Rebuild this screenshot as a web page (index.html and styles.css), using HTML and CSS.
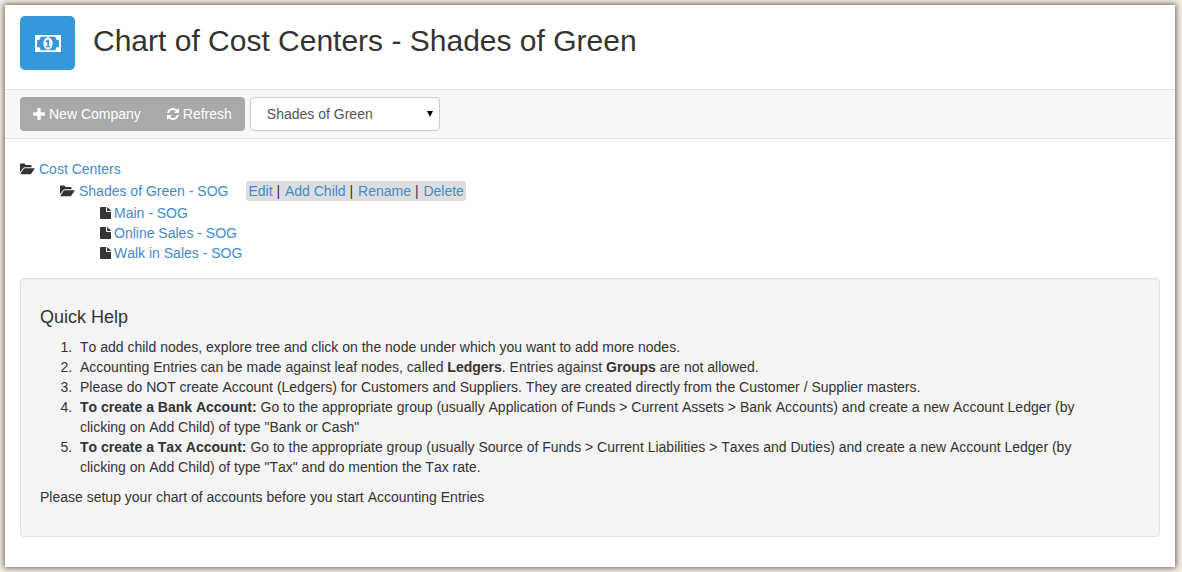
FILE: index.html
```html
<!DOCTYPE html>
<html lang="en">
<head>
<meta charset="utf-8">
<title>Chart of Cost Centers - Shades of Green</title>
<link rel="stylesheet" href="styles.css">
</head>
<body>
<svg class="sprite" aria-hidden="true">
  <symbol id="folder" viewBox="0 0 15 12"><path d="M0 9.600V1.400Q0 .4 1 .4H4.200Q5.200 .4 5.200 1.400V2H10.500Q11.600 2 11.600 3V4.300H5.200Q3.800 4.300 2.900 5.400L.1 9.100ZM.6 11.300Q0 11.300 .4 10.700L3.500 6.100Q4 5.200 5.100 5.200H14.200Q15 5.200 14.500 5.900L11.700 10.100Q11 11.300 9.900 11.300Z"/></symbol>
  <symbol id="file" viewBox="0 0 10 12" preserveAspectRatio="none"><path d="M.8 0H5.500V4.200Q5.500 5 6.300 5H10V11.200Q10 12 9.200 12H.8Q0 12 0 11.200V.8Q0 0 .8 0ZM6.500 .1Q6.800 .2 7.100 .5L9.500 3Q9.900 3.400 9.900 4H6.500Z"/></symbol>
</svg>
<main class="page">
  <header class="page-head">
    <span class="app-icon">
      <svg viewBox="0 0 26 17" aria-hidden="true"><path fill-rule="evenodd" d="M0 0H26V17H0ZM5.500 1.700A3.600 3.600 0 0 1 2 5.300V11.700A3.600 3.600 0 0 1 5.500 15.300H20.500A3.600 3.600 0 0 1 24 11.700V5.300A3.600 3.600 0 0 1 20.500 1.700Z"/><ellipse cx="13" cy="8.500" rx="4.600" ry="6.200"/><path class="one" d="M12.500 4.800H14V10.900H15.500V12.200H10.700V10.900H12.300V7L11.300 7.800L10.400 6.700Z"/></svg>
    </span>
    <h1>Chart of Cost Centers - Shades of Green</h1>
  </header>
  <div class="toolbar">
    <div class="button-group">
      <button type="button"><svg class="tool-icon plus" viewBox="192 128 1408 1408" aria-hidden="true"><path d="M1600 736v192q0 40-28 68t-68 28h-416v416q0 40-28 68t-68 28h-192q-40 0-68-28t-28-68v-416h-416q-40 0-68-28t-28-68v-192q0-40 28-68t68-28h416v-416q0-40 28-68t68-28h192q40 0 68 28t28 68v416h416q40 0 68 28t28 68z"/></svg>New Company</button>
      <button type="button"><svg class="tool-icon" viewBox="128 128 1536 1536" aria-hidden="true"><path d="M1639 1056q0 5-1 7-64 268-268 434.500t-478 166.500q-146 0-282.500-55t-243.500-157l-129 129q-19 19-45 19t-45-19-19-45v-448q0-26 19-45t45-19h448q26 0 45 19t19 45-19 45l-137 137q71 66 161 102t187 36q134 0 250-65t186-179q11-17 53-117 8-23 30-23h192q13 0 22.500 9.500t9.500 22.500zm25-800v448q0 26-19 45t-45 19h-448q-26 0-45-19t-19-45 19-45l138-138q-148-137-349-137-134 0-250 65t-186 179q-11 17-53 117-8 23-30 23h-199q-13 0-22.500-9.500t-9.500-22.500v-7q65-268 270-434.500t480-166.500q146 0 284 55.500t245 156.500l130-129q19-19 45-19t45 19 19 45z"/></svg>Refresh</button>
    </div>
    <div class="select-wrap">
      <select aria-label="Company"><option>Shades of Green</option></select>
      <svg class="arrow" viewBox="0 0 6 6" aria-hidden="true"><path d="M0 0H6L3 6Z"/></svg>
    </div>
  </div>
  <div class="content">
    <ul class="tree">
      <li>
        <div class="node"><svg class="folder"><use href="#folder"/></svg><a href="#">Cost Centers</a></div>
        <ul>
          <li>
            <div class="node"><svg class="folder"><use href="#folder"/></svg><a href="#">Shades of Green - SOG</a>
              <span class="actions"><a href="#">Edit</a> <span class="sep">|</span> <a href="#">Add Child</a> <span class="sep">|</span> <a href="#">Rename</a> <span class="sep">|</span> <a href="#">Delete</a></span>
            </div>
            <ul class="leaves">
              <li class="node"><svg class="file"><use href="#file"/></svg><a href="#">Main - SOG</a></li>
              <li class="node"><svg class="file"><use href="#file"/></svg><a href="#">Online Sales - SOG</a></li>
              <li class="node"><svg class="file"><use href="#file"/></svg><a href="#">Walk in Sales - SOG</a></li>
            </ul>
          </li>
        </ul>
      </li>
    </ul>
    <section class="well">
      <h2>Quick Help</h2>
      <ol>
        <li>To add child nodes, explore tree and click on the node under which you want to add more nodes.</li>
        <li>Accounting Entries can be made against leaf nodes, called <b>Ledgers</b>. Entries against <b>Groups</b> are not allowed.</li>
        <li>Please do NOT create Account (Ledgers) for Customers and Suppliers. They are created directly from the Customer / Supplier masters.</li>
        <li><b>To create a Bank Account:</b> Go to the appropriate group (usually Application of Funds &gt; Current Assets &gt; Bank Accounts) and create a new Account Ledger (by clicking on Add Child) of type "Bank or Cash"</li>
        <li><b>To create a Tax Account:</b> Go to the appropriate group (usually Source of Funds &gt; Current Liabilities &gt; Taxes and Duties) and create a new Account Ledger (by clicking on Add Child) of type "Tax" and do mention the Tax rate.</li>
      </ol>
      <p>Please setup your chart of accounts before you start Accounting Entries</p>
    </section>
  </div>
</main>
</body>
</html>
```
FILE: styles.css
```css
* { box-sizing: border-box; }
body {
  margin: 0;
  padding: 5px 7px 5px 5px;
  background: #f5ede3;
  color: #333;
  font: 14px/20px "Liberation Sans", Arial, sans-serif;
  font-kerning: none;
}
a { color: #428bca; text-decoration: none; }
a:hover { text-decoration: underline; }
.sprite { position: absolute; width: 0; height: 0; }
.page {
  background: #fff;
  box-shadow: 0 0 6px 1px rgba(0, 0, 0, .6);
}
.page-head {
  display: flex;
  align-items: flex-start;
  gap: 18px;
  padding: 11px 15px 19px;
}
.app-icon {
  display: flex;
  align-items: center;
  justify-content: center;
  width: 55px;
  height: 54px;
  border-radius: 5px;
  background: #3498db;
}
.app-icon svg { width: 26px; height: 17px; fill: #fff; }
.app-icon .one { fill: #3498db; }
h1 { margin: 8px 0 0; font-size: 30px; line-height: 34px; font-weight: 400; }
.toolbar {
  display: flex;
  gap: 5px;
  padding: 7px 15px;
  background: #f7f7f7;
  border-top: 1px solid #e4e4e4;
  border-bottom: 1px solid #e4e4e4;
}
.button-group {
  display: flex;
  border-radius: 4px;
  background: #a7a9aa;
}
.button-group button {
  display: flex;
  align-items: center;
  gap: 4px;
  height: 34px;
  padding: 0 13px;
  border: 0;
  background: none;
  color: #fff;
  font: inherit;
  cursor: pointer;
}
.tool-icon { width: 12px; height: 12px; fill: #fff; }
.select-wrap { position: relative; width: 190px; }
select {
  width: 100%;
  height: 34px;
  padding: 0 24px 0 16px;
  border: 1px solid #ccc;
  border-radius: 4px;
  background: #fff;
  color: #555;
  font: inherit;
  appearance: none;
}
.arrow { position: absolute; right: 7px; top: 14px; width: 6px; height: 6px; pointer-events: none; }
.content { padding: 20px 15px 30px; }
ul { margin: 0; padding: 0; list-style: none; }
.tree ul { margin-top: 2px; padding-left: 40px; }
.node { display: flex; align-items: center; }
.folder { width: 15px; height: 12px; margin-right: 4px; fill: #333; }
.file { width: 11px; height: 12px; margin-right: 3px; fill: #333; }
.actions { margin-left: 18px; padding: 0 2px; border-radius: 3px; background: #ddd; }
.sep { margin-right: 1px; }
.well {
  margin-top: 15px;
  padding: 19px;
  border: 1px solid #e1e1e1;
  border-radius: 4px;
  background: #f4f4f4;
  box-shadow: inset 0 1px 1px rgba(0, 0, 0, .05);
}
h2 { margin: 9px 0 10px; font-size: 18px; line-height: 20px; font-weight: 400; }
ol { margin: 0 0 10px; padding: 0 30px 0 40px; }
ol li::marker { content: counter(list-item) ".\a0\a0"; }
p { margin: 0 0 10px; }
```
